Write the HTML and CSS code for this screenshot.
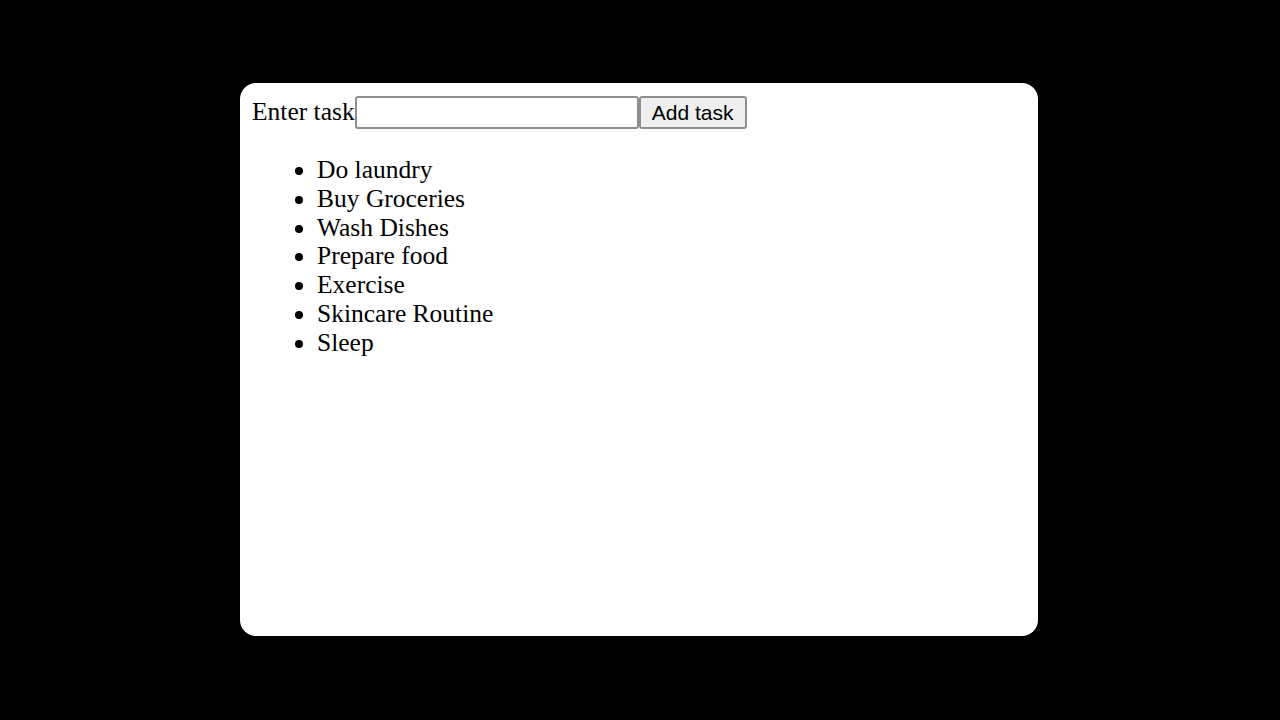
FILE: index.html
```html
<!DOCTYPE html>
<html>
<head>
<meta charset="utf-8">
<link rel="stylesheet" href="styles.css">
</head>
<body>
<div class="card">
  <div class="row">
    <label class="label" for="task">Enter task</label><input class="input" id="task" type="text"><button class="btn">Add task</button>
  </div>
  <ul class="list">
    <li>Do laundry</li>
    <li>Buy Groceries</li>
    <li>Wash Dishes</li>
    <li>Prepare food</li>
    <li>Exercise</li>
    <li>Skincare Routine</li>
    <li>Sleep</li>
  </ul>
</div>
</body>
</html>
```
FILE: styles.css
```css
html, body {
  margin: 0;
  padding: 0;
  background: #000;
  width: 1280px;
  height: 720px;
  overflow: hidden;
}
body {
  display: flex;
  justify-content: flex-start;
  padding: 83px 0 0 240px;
  box-sizing: border-box;
}
.card {
  width: 798px;
  height: 553px;
  background: #fff;
  border-radius: 16px;
  padding: 13px 12px;
  box-sizing: border-box;
  font-family: "Liberation Serif", "Times New Roman", serif;
  font-size: 25.5px;
  line-height: 28.83px;
  color: #000;
}
.row {
  display: flex;
  align-items: center;
  height: 33px;
}
.input {
  width: 284px;
  height: 33px;
  box-sizing: border-box;
  border: 2px solid #8f8f8f;
  border-radius: 3px;
  background: #fff;
  margin: 0;
  padding: 0 3px;
  outline: none;
}
.btn {
  width: 108px;
  height: 33px;
  box-sizing: border-box;
  border: 2px solid #8f8f8f;
  border-radius: 3px;
  background: #efefef;
  margin: 0;
  padding: 0;
  font-family: "Liberation Sans", Arial, sans-serif;
  font-size: 21px;
  color: #000;
}
.list {
  margin: 27px 0 0 0;
  padding-left: 65px;
}
```
